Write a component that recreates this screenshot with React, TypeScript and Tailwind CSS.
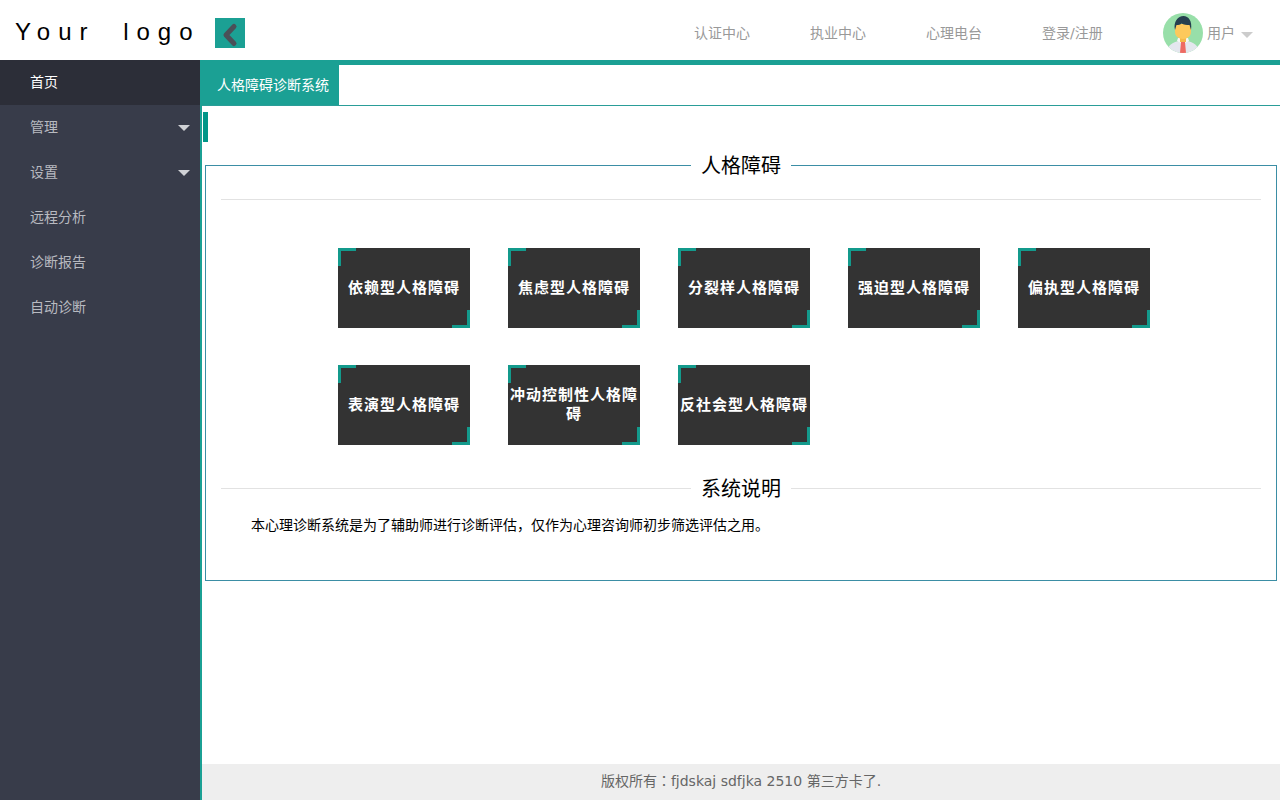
const font = 'font-["DejaVu_Sans","Noto_Sans_CJK_SC",sans-serif]';

const menu = [
  { label: '首页', active: true },
  { label: '管理', caret: true },
  { label: '设置', caret: true },
  { label: '远程分析' },
  { label: '诊断报告' },
  { label: '自动诊断' },
];

const links = [
  { label: '认证中心', cls: 'w-[56px] mr-[60px]' },
  { label: '执业中心', cls: 'w-[56px] mr-[60px]' },
  { label: '心理电台', cls: 'w-[56px] mr-[60px]' },
  { label: '登录/注册', cls: 'w-[61px] mr-[60px]' },
];

const disorders = [
  '依赖型人格障碍',
  '焦虑型人格障碍',
  '分裂样人格障碍',
  '强迫型人格障碍',
  '偏执型人格障碍',
  '表演型人格障碍',
  '冲动控制性人格障碍',
  '反社会型人格障碍',
];

function Caret({ className }: { className: string }) {
  return (
    <span
      className={`h-0 w-0 border-x-[6px] border-t-[6px] border-x-transparent ${className}`}
    />
  );
}

function Avatar() {
  return (
    <svg viewBox="0 0 40 40" className="h-10 w-10 shrink-0">
      <defs>
        <clipPath id="avatar-clip">
          <circle cx="20" cy="20" r="20" />
        </clipPath>
      </defs>
      <g clipPath="url(#avatar-clip)">
        <rect width="40" height="40" fill="#98dfa9" />
        <path d="M4 40c0-8 6-11 12-12h8c6 1 12 4 12 12z" fill="#e4e7ee" />
        <path d="M14 28l6 3 6-3-1-3H15z" fill="#f7f7f7" />
        <path d="M18 29h4l1 11h-6z" fill="#ee6a62" />
        <rect x="17" y="22" width="6" height="7" fill="#f5b94a" />
        <path d="M12 11h16v8c0 4-3.500 7-8 7s-8-3-8-7z" fill="#fdc95c" />
        <path d="M12 17c-2-8 3-14 8.500-14 5 0 9 5 7.500 14l-1.500-5c-3 0-6-.5-8-1.500-1 1-3 1.500-5 1.500z" fill="#26404f" />
      </g>
    </svg>
  );
}

function DisorderCard({ label }: { label: string }) {
  return (
    <div className="relative flex h-20 w-[132px] items-center justify-center bg-[#333333] text-center text-[15px] leading-[19px] font-bold tracking-[1px] text-white">
      <span className="absolute top-0 left-0 h-[18px] w-[18px] border-t-[3px] border-l-[3px] border-[#139a8c]" />
      <span className="absolute right-0 bottom-0 h-[18px] w-[18px] border-r-[3px] border-b-[3px] border-[#139a8c]" />
      <span>{label}</span>
    </div>
  );
}

export default function App() {
  return (
    <div className={`flex h-screen w-full flex-col overflow-hidden bg-white text-sm text-black ${font}`}>
      {/* Header */}
      <header className="flex h-[65px] shrink-0 border-b-[5px] border-[#1ba094] bg-white pt-1.5">
        <div className="flex items-center pl-[15px]">
          <span className="w-[200px] pb-0.5 font-['Liberation_Sans',sans-serif] text-2xl leading-none tracking-[8px] whitespace-nowrap text-black [word-spacing:13px]">
            Your logo
          </span>
          <button className="flex h-[30px] w-[30px] items-center justify-center bg-[#1ba094]">
            <svg viewBox="0 0 30 30" className="h-[30px] w-[30px]">
              <path d="M19 8.500l-8 8.500 8 8.500" fill="none" stroke="#4a5058" strokeWidth="5" strokeLinecap="round" strokeLinejoin="round" />
            </svg>
          </button>
        </div>
        <nav className="ml-auto flex items-center text-[#999999]">
          {links.map((l) => (
            <a key={l.label} className={`${l.cls} whitespace-nowrap`}>
              {l.label}
            </a>
          ))}
          <div className="mr-[27px] flex items-center">
            <Avatar />
            <span className="ml-1">用户</span>
            <Caret className="mt-1 ml-1.5 border-t-[#cccccc]" />
          </div>
        </nav>
      </header>

      <div className="-mt-[5px] flex min-h-0 flex-1">
        {/* Sidebar */}
        <aside className="z-10 w-[200px] shrink-0 bg-[#383c4a]">
          {menu.map((m) => (
            <div
              key={m.label}
              className={`flex h-[45px] items-center justify-between pr-2.5 pb-0.5 pl-[30px] ${
                m.active ? 'bg-[#2c2e38] text-white' : 'text-[#b8bac0]'
              }`}
            >
              {m.label}
              {m.caret && <Caret className="mt-0.5 border-t-[#d0d2d6]" />}
            </div>
          ))}
        </aside>

        {/* Main */}
        <main className="flex min-w-0 flex-1 flex-col border-l-2 border-[#1ba094]">
          <div className="h-[46px] shrink-0 border-b border-[#2a9d98] pt-[5px]">
            <div className="-ml-0.5 flex h-10 w-[139px] items-center bg-[#1ba094] pl-[17px] text-white">
              人格障碍诊断系统
            </div>
          </div>
          <div className="mt-1.5 ml-px h-[30px] w-[5px] bg-[#009688]" />

          <fieldset className="mt-[9px] mr-[3px] ml-[3px] h-[430px] border border-[#3b8ea5] px-[15px]">
            <legend className="mx-auto bg-white px-2.5 pt-px text-center text-xl leading-7">人格障碍</legend>
            <div className="mt-[19px] border-t border-[#e2e2e2]" />

            <div className="mt-12 ml-[117px] grid grid-cols-[repeat(5,132px)] gap-x-[38px] gap-y-[37px]">
              {disorders.map((d) => (
                <DisorderCard key={d} label={d} />
              ))}
            </div>

            <div className="mt-[28px] flex items-center">
              <div className="flex-1 border-t border-[#e2e2e2]" />
              <span className="px-2.5 pt-0.5 text-xl leading-7">系统说明</span>
              <div className="flex-1 border-t border-[#e2e2e2]" />
            </div>
            <p className="mt-[12px] pl-[30px] leading-5">
              本心理诊断系统是为了辅助师进行诊断评估，仅作为心理咨询师初步筛选评估之用。
            </p>
          </fieldset>

          <footer className="mt-auto flex h-9 shrink-0 items-center justify-center bg-[#eeeeee] text-[#666666]">
            <span className="pb-0.5">
              版权所有<span className='font-["Noto_Sans_CJK_TC",sans-serif] leading-none'>：</span>fjdskaj sdfjka 2510 第三方卡了.
            </span>
          </footer>
        </main>
      </div>
    </div>
  );
}
